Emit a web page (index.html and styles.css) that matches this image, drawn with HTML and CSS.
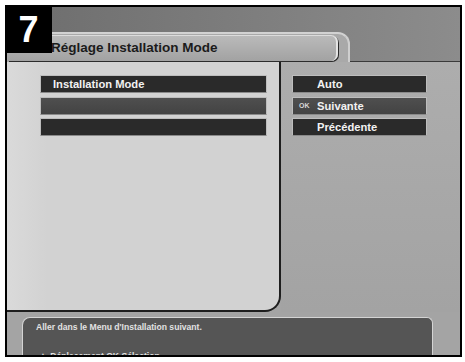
FILE: index.html
```html
<!DOCTYPE html>
<html lang="fr">
<head>
    <meta charset="UTF-8">
    <title>Réglage Installation Mode</title>
    <link rel="stylesheet" href="styles.css">
</head>
<body>
    <div class="frame">
        <div class="step">7</div>

        <div class="head">
            <div class="tab">
                <div class="title-bar">Réglage Installation Mode</div>
            </div>
        </div>

        <div class="main">
            <div class="left-panel">
                <div class="row"><span class="row-text">Installation Mode</span></div>
                <div class="row row-mid"></div>
                <div class="row"></div>
            </div>
            <div class="right-panel">
                <div class="row option"><span class="key"></span><span class="row-text">Auto</span></div>
                <div class="row row-mid option"><span class="key">OK</span><span class="row-text">Suivante</span></div>
                <div class="row option"><span class="key"></span><span class="row-text">Précédente</span></div>
            </div>
        </div>

        <div class="foot">
            <div class="help">
                <div class="help-line">Aller dans le Menu d'Installation suivant.</div>
                <div class="help-line help-keys"><span class="arrow">▲</span> Déplacement <span class="ok">OK</span> Sélection</div>
            </div>
        </div>
    </div>
</body>
</html>
```

FILE: styles.css
```css
body {
    margin: 0;
    background: #ffffff;
    font-family: "Liberation Sans", Arial, sans-serif;
}

.frame {
    position: relative;
    display: flex;
    flex-direction: column;
    width: 453px;
    height: 348px;
    margin: 5px 0 0 5px;
    border: 2px solid #000;
    background: #a4a4a4;
    overflow: hidden;
}

.step {
    position: absolute;
    top: -2px;
    left: -2px;
    width: 47px;
    height: 48px;
    background: #000;
    color: #fff;
    font-weight: bold;
    font-size: 36px;
    line-height: 49px;
    text-align: center;
    z-index: 2;
}

.head {
    height: 55px;
    flex: 0 0 auto;
    background: linear-gradient(90deg, #6d6d6d, #8c8c8c);
    border-bottom: 1px solid #3a3a3a;
    box-sizing: border-box;
}

.tab {
    width: 343px;
    height: 30px;
    margin-top: 25px;
    box-sizing: border-box;
    background: #a9a9a9;
    border-top: 2px solid #d2d2d2;
    border-right: 2px solid #cfcfcf;
    border-top-right-radius: 12px;
    padding: 1px 0 0 1px;
}

.title-bar {
    width: 330px;
    height: 26px;
    box-sizing: border-box;
    padding: 4px 0 0 43px;
    background: linear-gradient(#bababa, #a2a2a2);
    border-top: 1px solid #dcdcdc;
    border-right: 2px solid #e4e4e4;
    border-radius: 0 7px 7px 0;
    box-shadow: 1px 1px 0 #2c2c2c;
    color: #1b1b1b;
    font-weight: bold;
    font-size: 13.5px;
}

.main {
    display: flex;
    height: 250px;
    flex: 0 0 auto;
}

.left-panel {
    width: 274px;
    box-sizing: border-box;
    padding: 13px 0 0 33px;
    display: flex;
    flex-direction: column;
    gap: 3.5px;
    background: linear-gradient(90deg, #dadada, #d2d2d2 40px);
    border-right: 2px solid #1e1e1e;
    border-bottom: 2px solid #1e1e1e;
    border-bottom-right-radius: 16px;
}

.right-panel {
    flex: 1;
    box-sizing: border-box;
    padding: 13px 0 0 11px;
    display: flex;
    flex-direction: column;
    gap: 3.5px;
    background: linear-gradient(#adadad, #a3a3a3);
}

.row {
    display: flex;
    align-items: center;
    width: 227px;
    height: 18px;
    box-sizing: border-box;
    padding-left: 12px;
    background: #2a2a2a;
    border: 1px solid #bdbdbd;
    border-bottom-color: #8a8a8a;
    color: #f2f2f2;
    font-weight: bold;
    font-size: 11.2px;
}

.row-mid {
    background: linear-gradient(#4f4f4f, #434343);
}

.option {
    width: 135px;
    padding-left: 6px;
}

.key {
    width: 18px;
    font-size: 7px;
    color: #d8d8d8;
}

.foot {
    flex: 1;
    padding: 5px 0 0 15px;
}

.help {
    width: 411px;
    height: 60px;
    box-sizing: border-box;
    padding: 4px 0 0 13px;
    background: #555555;
    border-top: 1px solid #d4d4d4;
    border-left: 1px solid #d4d4d4;
    border-right: 1px solid #d4d4d4;
    border-radius: 8px 6px 0 0;
    color: #e2e2e2;
    font-weight: bold;
    font-size: 8.6px;
}

.help-keys {
    margin-top: 18px;
    padding-left: 2px;
}

.arrow {
    font-size: 10px;
}
```
